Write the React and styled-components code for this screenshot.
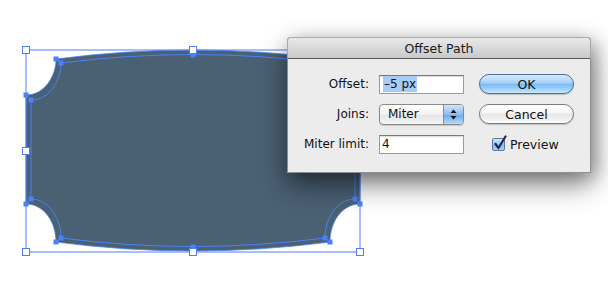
import React from "react";
import styled, { createGlobalStyle } from "styled-components";

const GlobalStyle = createGlobalStyle`
  html, body { margin: 0; padding: 0; background: #fff; }
  body { font-family: "DejaVu Sans", "Liberation Sans", sans-serif; }
`;

const SEL = "#4d80f6";

const Canvas = styled.div`
  position: relative;
  width: 608px;
  height: 298px;
  overflow: hidden;
  background: #fff;
`;

const Artwork = styled.svg`
  position: absolute;
  left: 0;
  top: 0;
`;

const Dialog = styled.div`
  position: absolute;
  left: 287px;
  top: 37px;
  width: 302px;
  background: #ececec;
  border: 1px solid #8f8f8f;
  border-top: none;
  border-radius: 4px 4px 0 0;
  box-shadow: 0 12px 28px rgba(0, 0, 0, 0.45), 6px 4px 18px rgba(0, 0, 0, 0.25);
  font-size: 12px;
  color: #111;
`;

const TitleBar = styled.div`
  height: 20px;
  display: flex;
  align-items: center;
  justify-content: center;
  background: linear-gradient(#e9e9e9, #c9c9c9);
  border: 1px solid #a9a9a9;
  border-bottom: 1px solid #5a5a5a;
  border-radius: 4px 4px 0 0;
  margin: 0 -1px;
  font-size: 12.5px;
  color: #1a1a1a;
`;

const Body = styled.div`
  display: grid;
  grid-template-columns: 1fr 85px 100px;
  grid-auto-rows: 20px;
  column-gap: 10px;
  row-gap: 10px;
  padding: 15px 17px 18px 16px;
  align-items: center;
`;

const Label = styled.div`
  text-align: right;
  white-space: nowrap;
`;

const Field = styled.div`
  height: 19px;
  box-sizing: border-box;
  background: #fff;
  border: 1px solid #9c9c9c;
  border-top-color: #7a7a7a;
  box-shadow: inset 0 1px 1px rgba(0, 0, 0, 0.15);
  display: flex;
  align-items: center;
  padding-left: ${(p) => (p.$pad ? 3 : 2)}px;
  font-size: 12px;
`;

const Highlight = styled.span`
  background: #a9cbf9;
  padding: 1px 1px;
`;

const Select = styled.div`
  height: 21px;
  box-sizing: border-box;
  border: 1px solid #8a8a8a;
  border-radius: 4px;
  display: flex;
  overflow: hidden;
  background: linear-gradient(#ffffff, #f2f2f2 50%, #e4e4e4 51%, #f4f4f4);
  box-shadow: 0 1px 1px rgba(0, 0, 0, 0.15);
`;

const SelectText = styled.div`
  flex: 1;
  display: flex;
  align-items: center;
  padding-left: 8px;
  font-size: 12px;
`;

const Stepper = styled.div`
  width: 19px;
  border-left: 1px solid #6d8fc4;
  background: linear-gradient(#cfe4fb, #8ebdf0 50%, #6aa7ec 51%, #b7dbfb);
  display: flex;
  align-items: center;
  justify-content: center;
`;

const Button = styled.div`
  width: 95px;
  justify-self: end;
  height: 20px;
  box-sizing: border-box;
  border-radius: 10px;
  display: flex;
  align-items: center;
  justify-content: center;
  font-size: 12.5px;
  border: 1px solid ${(p) => (p.$primary ? "#4b6d9b" : "#7b7b7b")};
  background: ${(p) =>
    p.$primary
      ? "linear-gradient(#d6ebfd, #a6d0f8 45%, #7cbaf4 52%, #a9d8fc 85%, #c9ecff)"
      : "linear-gradient(#ffffff, #f6f6f6 45%, #e7e7e7 52%, #f3f3f3 85%, #ffffff)"};
  box-shadow: 0 1px 1px rgba(0, 0, 0, 0.2);
`;

const CheckRow = styled.div`
  display: flex;
  align-items: center;
  gap: 5px;
  font-size: 12.5px;
  padding-left: 18px;
`;

const Box = styled.div`
  width: 13px;
  height: 13px;
  box-sizing: border-box;
  border: 1px solid #5c79a6;
  border-radius: 2px;
  background: linear-gradient(#d3e7fb, #8dbbef 55%, #a6d0f6);
  position: relative;
`;

const Check = styled.svg`
  position: absolute;
  left: 0px;
  top: -4px;
`;

const Handle = ({ x, y }) => (
  <rect x={x - 3.5} y={y - 3.5} width={7} height={7} fill="#fff" stroke={SEL} strokeWidth={1} />
);

const Anchor = ({ x, y }) => <rect x={x - 2.5} y={y - 2.5} width={5} height={5} fill={SEL} />;

const outer =
  "M26 95 C44 95 56 77 56 59 Q193 41 330 59 C330 77 342 95 360 95 L360 204 C342 204 330 222 330 242 Q193 260 56 242 C56 222 44 204 26 204 Z";
const inner =
  "M31 100 C49 100 61 81 61 63 Q193 46 325 63 C325 81 337 100 355 100 L355 199 C337 199 325 219 325 238 Q193 255 61 238 C61 219 49 199 31 199 Z";

const handles = [
  [26, 50], [193, 50], [360, 50],
  [26, 151], [360, 151],
  [26, 252], [193, 252], [360, 252],
];
const anchors = [
  [26, 95], [56, 59], [26, 204], [56, 242], [330, 242], [360, 204],
  [31, 100], [61, 63], [31, 199], [61, 238], [325, 238], [355, 199],
  [193, 55], [193, 247], [193, 53],
];

export default function App() {
  return (
    <Canvas>
      <GlobalStyle />
      <Artwork width="608" height="298" viewBox="0 0 608 298">
        <path d={outer} fill="#4a6073" stroke={SEL} strokeWidth="0.8" />
        <path d={inner} fill="none" stroke={SEL} strokeWidth="1" />
        <rect x="26" y="50" width="334" height="202" fill="none" stroke={SEL} strokeWidth="1" />
        {anchors.map(([x, y], i) => (
          <Anchor key={i} x={x} y={y} />
        ))}
        {handles.map(([x, y], i) => (
          <Handle key={i} x={x} y={y} />
        ))}
      </Artwork>

      <Dialog>
        <TitleBar>Offset Path</TitleBar>
        <Body>
          <Label>Offset:</Label>
          <Field $pad>
            <Highlight>–5 px</Highlight>
          </Field>
          <Button $primary>OK</Button>

          <Label>Joins:</Label>
          <Select>
            <SelectText>Miter</SelectText>
            <Stepper>
              <svg width="7" height="11" viewBox="0 0 7 11">
                <path d="M3.5 0.5 L6.5 4 L0.5 4 Z" fill="#111" />
                <path d="M3.5 10.5 L6.5 7 L0.5 7 Z" fill="#111" />
              </svg>
            </Stepper>
          </Select>
          <Button>Cancel</Button>

          <Label>Miter limit:</Label>
          <Field>4</Field>
          <CheckRow>
            <Box>
              <Check width="15" height="16" viewBox="0 0 15 16">
                <path d="M2.5 9 L5.5 13 L12.5 1.5" fill="none" stroke="#1d2f4f" strokeWidth="2.2" strokeLinecap="round" strokeLinejoin="round" />
              </Check>
            </Box>
            Preview
          </CheckRow>
        </Body>
      </Dialog>
    </Canvas>
  );
}
